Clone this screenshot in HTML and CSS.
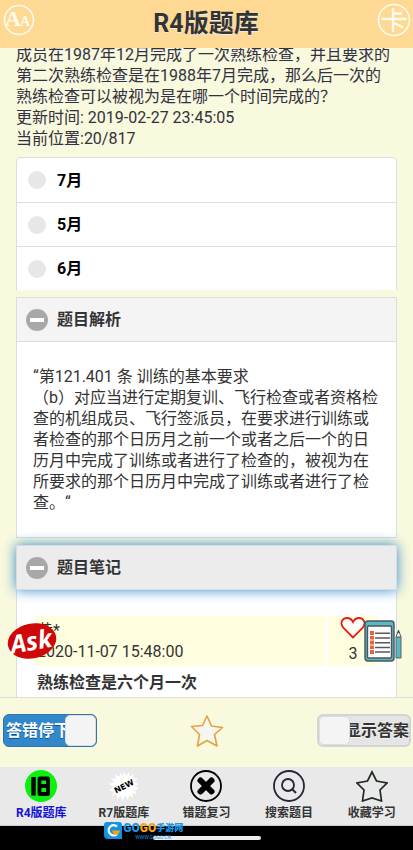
FILE: index.html
```html
<!DOCTYPE html>
<html lang="zh-CN">
<head>
<meta charset="utf-8">
<meta name="viewport" content="width=device-width, initial-scale=1">
<title>R4版题库</title>
<link rel="stylesheet" href="styles.css">
</head>
<body>
<header class="topbar">
  <button class="round" aria-label="字体大小">
    <svg width="32" height="32" viewBox="0 0 32 32"><circle cx="16" cy="16" r="14.5" fill="none" stroke="#fffaf0" stroke-width="1.6"/><text x="2" y="22" class="serif-a" font-size="22">A</text><text x="17" y="22" class="serif-a" font-size="14">A</text></svg>
  </button>
  <h1>R4版题库</h1>
  <button class="round" aria-label="答题卡">
    <svg width="34" height="34" viewBox="0 0 34 34"><circle cx="17" cy="17" r="15.500" fill="none" stroke="#fffaf0" stroke-width="1.6"/><path d="M16 5V29M16 10.500H25M4.500 16H29.500M17 20L26 24.500" fill="none" stroke="#fffaf0" stroke-width="2.400"/></svg>
  </button>
</header>

<main class="content">
  <p class="question">成员在1987年12月完成了一次熟练检查，并且要求的<br>第二次熟练检查是在1988年7月完成，那么后一次的<br>熟练检查可以被视为是在哪一个时间完成的？<br>更新时间: 2019-02-27 23:45:05<br>当前位置:20/817</p>

  <div class="options">
    <label><input type="radio" name="answer">7月</label>
    <label><input type="radio" name="answer">5月</label>
    <label><input type="radio" name="answer">6月</label>
  </div>

  <section class="panel">
    <button class="panel-head" aria-expanded="true"><span class="minus"></span>题目解析</button>
    <div class="panel-body">
      <p>“第121.401 条 训练的基本要求<br>（b）对应当进行定期复训、飞行检查或者资格检查的机组成员、飞行签派员，在要求进行训练或者检查的那个日历月之前一个或者之后一个的日历月中完成了训练或者进行了检查的，被视为在所要求的那个日历月中完成了训练或者进行了检查。“</p>
    </div>
  </section>

  <section class="panel notes">
    <button class="panel-head focused" aria-expanded="true"><span class="minus"></span>题目笔记</button>
    <div class="panel-body">
      <div class="note">
        <div class="note-meta">黄*<br>2020-11-07 15:48:00</div>
        <button class="note-like" aria-label="点赞">
          <svg width="26" height="24" viewBox="0 0 26 24"><path d="M13 21.500L3.500 12C-1 6.500 3 2 7 2C10 2 12 4 13 6C14 4 16 2 19 2C23 2 27 6.500 22.500 12Z" fill="#fffdf5" stroke="#e0201c" stroke-width="1.800"/></svg>
          <span>3</span>
        </button>
      </div>
      <p class="note-text">熟练检查是六个月一次</p>
    </div>
  </section>

  <button class="float ask" aria-label="提问">
    <svg width="50" height="40" viewBox="0 0 50 40"><ellipse cx="25" cy="20" rx="24.500" ry="17.500" transform="rotate(-12 25 20)" fill="#cf0707"/><text x="24" y="29" transform="rotate(-10 25 20)" class="ask-word">Ask</text></svg>
  </button>
  <button class="float notebook" aria-label="写笔记">
    <svg width="38" height="42" viewBox="0 0 38 42"><rect x="1" y="1" width="29" height="40" rx="3" fill="#5cb8c4" stroke="#49555b" stroke-width="1.400"/><rect x="3.500" y="6" width="24" height="32" rx="1" fill="#fff" stroke="#49555b" stroke-width="1.400"/><path d="M6 11h4v4h-4zM6 16h4v3.500h-4zM6 20.500h4v4h-4zM6 25.500h4v3.500h-4zM6 30h4v4h-4z" fill="#e56339"/><path d="M11 13.300H26M11 18H26M11 22.700H26M11 27.400H26M11 32.100H26" stroke="#59595f" stroke-width="1.500"/><path d="M32 17H37V38H32Z" fill="#5cb8c4" stroke="#59656b"/><path d="M32 17L34.500 10L37 17Z" fill="#f7f3e8" stroke="#59656b"/><path d="M33.500 13L34.500 10L35.500 13Z" fill="#444"/></svg>
  </button>
</main>

<div class="toolbar">
  <label class="switch on"><input type="checkbox" checked><span class="switch-text">答错停下</span><span class="knob"></span></label>
  <button class="favorite" aria-label="收藏">
    <svg width="34" height="34" viewBox="0 0 34 34"><path d="M17 2L21.500 12L32.500 13.500L24.500 20.500L27 32L17 26.500L7.500 32L9.500 20.500L1.500 12.500L12.500 11.500Z" fill="#f6f5ef" stroke="#e3a33d" stroke-width="1.600" stroke-linejoin="round"/></svg>
  </button>
  <label class="switch off"><input type="checkbox"><span class="knob"></span><span class="switch-text">显示答案</span></label>
</div>

<nav class="tabs">
  <a href="#r4" class="active">
    <svg width="32" height="32" viewBox="0 0 32 32"><circle cx="16" cy="16" r="16" fill="#09f20d"/><path d="M8.500 7V25.500" stroke="#000" stroke-width="4.500"/><path d="M14.500 8.500H23V24H14.500ZM14.500 16H23" fill="none" stroke="#000" stroke-width="3.800" stroke-linejoin="round"/></svg>
    R4版题库</a>
  <a href="#r7">
    <svg width="32" height="32" viewBox="0 0 32 32"><path d="M16 1L18 6L21 2L21.500 7L26 4L24.500 9L30 8L26.500 12L31 14L27 16L31 19L26.500 20L29 24L24.500 23L25 28L21 25L20 30L17 26L14 31L13 26L9 29L8.500 24L4 26L6 21L1 21L5 17L1 14L6 12L3 8L8 9L7 4L11.500 7L12 2L15 6Z" fill="#fff"/><text x="16" y="19" transform="rotate(-27 16 16)" class="new-word">NEW</text></svg>
    R7版题库</a>
  <a href="#wrong">
    <svg width="32" height="32" viewBox="0 0 32 32"><circle cx="16" cy="16" r="15" fill="none" stroke="#000" stroke-width="1.800"/><path d="M10.500 10.500L21.500 21.500M21.500 10.500L10.500 21.500" stroke="#000" stroke-width="6" stroke-linecap="round"/></svg>
    错题复习</a>
  <a href="#search">
    <svg width="32" height="32" viewBox="0 0 32 32"><circle cx="16" cy="16" r="15" fill="none" stroke="#25243b" stroke-width="1.800"/><circle cx="15" cy="15" r="6" fill="none" stroke="#25243b" stroke-width="1.800"/><path d="M19 19L23 23" stroke="#25243b" stroke-width="2"/></svg>
    搜索题目</a>
  <a href="#saved">
    <svg width="32" height="32" viewBox="0 0 32 32"><path d="M16 2L20.500 11L31 13L24 20L25.500 31L16 28L6.500 31L8 20L1 13L11.500 11Z" fill="none" stroke="#202b20" stroke-width="1.700"/></svg>
    收藏学习</a>
</nav>

<footer class="system">
  <div class="home-bar"></div>
  <div class="watermark">
    <svg width="20" height="19" viewBox="0 0 20 19"><path d="M4 1H16Q19 1 19 4V18H5Q1 18 1 14V4Q1 1 4 1Z" fill="#1293e0"/><path d="M14 5.500A5 5 0 1 0 14 13" fill="none" stroke="#fff" stroke-width="2.400"/><path d="M9 9.500H17Q16 14 11 14" fill="#f7a21b"/></svg>
    <span class="mark-text"><b>GO</b><b class="gold">GO</b><b class="cn">手游网</b><small>WWW.GOGO.CN</small></span>
  </div>
</footer>
</body>
</html>
```
FILE: styles.css
```css
* { box-sizing: border-box; }

body {
  margin: 0;
  height: 100vh;
  display: flex;
  flex-direction: column;
  background: #f9f9de;
  color: #333;
  font: 16px/21px Roboto, "Noto Sans CJK SC", sans-serif;
}

button {
  margin: 0;
  padding: 0;
  border: 0;
  background: none;
  color: inherit;
  font: inherit;
}

p { margin: 0; }
svg { display: block; }

.topbar {
  flex: none;
  height: 48px;
  padding: 0 2px 8px 3px;
  display: flex;
  align-items: center;
  justify-content: space-between;
  background: #fdd993;
}
.topbar h1 {
  margin: 8px 0 0;
  font-size: 25px;
  line-height: 32px;
  font-weight: 700;
  text-shadow: 0 1px 0 #eee;
}
.serif-a {
  fill: #fffaf0;
  font-family: "Liberation Serif", serif;
  font-weight: 700;
}

.content {
  flex: 1;
  min-height: 0;
  overflow: hidden;
  position: relative;
  padding: 0 16px;
}
.question { margin-top: -4px; text-shadow: 0 1px 0 #f3f3f3; }

.options {
  margin: 8px 0 7px;
  border: 1px solid #ddd;
  border-bottom: 0;
  border-radius: 5px 5px 0 0;
  background: #fff;
}
.options label {
  display: flex;
  align-items: center;
  gap: 11px;
  height: 44px;
  padding-left: 11px;
  color: #000;
  font-weight: 700;
}
.options label + label { border-top: 1px solid #ddd; }
.options input {
  appearance: none;
  margin: 0;
  width: 18px;
  height: 18px;
  border-radius: 50%;
  background: #e7e7e7;
}

.panel { margin-bottom: 7px; }
.panel-head {
  position: relative;
  display: flex;
  align-items: center;
  gap: 9px;
  width: 100%;
  height: 45px;
  padding-left: 9px;
  border: 1px solid #ddd;
  background: #f4f4f4;
  font-weight: 700;
  text-shadow: 0 1px 0 #f3f3f3;
}
.panel-head.focused {
  background: #ececec;
  border-color: #d3dde3;
  box-shadow: 0 0 12px #3388cc;
}
.minus {
  display: grid;
  place-items: center;
  width: 22px;
  height: 22px;
  border-radius: 50%;
  background: #a8a8a8;
}
.minus::before {
  content: "";
  width: 14px;
  height: 4px;
  background: #fff;
}
.panel-body {
  padding: 24px 16px;
  border: 1px solid #ddd;
  border-top: 0;
  background: #fff;
}
.notes .panel-body { padding: 26px 18px; }

.note { display: flex; gap: 3px; }
.note-meta, .note-like { height: 50px; background: #ffffe0; }
.note-meta { flex: 1; padding: 4px 2px; }
.note-like {
  width: 50px;
  display: flex;
  flex-direction: column;
  align-items: center;
}
.note-like span { margin-top: 3px; }
.note-text { padding: 6px 2px; font-weight: 700; }

.float { position: absolute; }
.ask { left: 7px; bottom: 36px; }
.notebook { right: 11px; bottom: 35px; }
.ask-word {
  fill: #fff;
  font: italic 700 25px "Liberation Sans Narrow", "Open Sans", sans-serif;
  text-anchor: middle;
}

.toolbar {
  flex: none;
  height: 70px;
  padding: 0 2px 4px 3px;
  border-top: 1px solid #ddd;
  display: flex;
  align-items: center;
  justify-content: space-between;
}
.switch {
  position: relative;
  display: flex;
  align-items: center;
  width: 94px;
  height: 33px;
  border-radius: 6px;
  overflow: hidden;
  font-weight: 700;
  white-space: nowrap;
}
.switch input {
  position: absolute;
  inset: 0;
  margin: 0;
  opacity: 0;
}
.switch-text { flex: 1; min-width: 0; overflow: hidden; }
.knob {
  flex: none;
  width: 31px;
  height: 100%;
  border: 1px solid #ddd;
  border-radius: 5px;
  background: #f4f4f4;
}
.on {
  padding-left: 2px;
  border: 1px solid #2f74ab;
  background: #3388cc;
  color: #fff;
  text-shadow: 0 1px 0 #005599;
}
.off {
  border: 2px solid #d4d4d4;
  background: #e5e5e5;
  text-shadow: 0 1px 0 #f3f3f3;
}
.off .switch-text { display: flex; justify-content: flex-end; }

.tabs {
  flex: none;
  display: grid;
  grid-template-columns: repeat(5, 1fr);
  height: 59px;
  padding-top: 3px;
  background: #e9e9e9;
  border-bottom: 1px solid #ccc;
}
.tabs a {
  display: flex;
  flex-direction: column;
  align-items: center;
  gap: 2px;
  color: #333;
  font-size: 12px;
  line-height: 18px;
  font-weight: 700;
  text-decoration: none;
}
.tabs .active { color: #1512d8; }
.new-word {
  font: 700 8px "DejaVu Sans", sans-serif;
  text-anchor: middle;
}

.system {
  flex: none;
  position: relative;
  height: 24px;
  padding-top: 10px;
  background: #000;
}
.home-bar {
  width: 108px;
  height: 4px;
  margin: 0 auto;
  border-radius: 2px;
  background: #eee;
}
.watermark {
  position: absolute;
  left: 25%;
  top: -5px;
  display: flex;
}
.mark-text {
  display: grid;
  grid-template-columns: auto auto auto;
  align-content: start;
  color: #1c96e5;
  font-family: "Liberation Sans Narrow", Roboto, "Noto Sans CJK SC", sans-serif;
  font-size: 12px;
  line-height: 14px;
}
.mark-text b { font-weight: 900; }
.mark-text .gold { color: #f8a51b; }
.mark-text .cn { font-size: 9px; }
.mark-text small {
  grid-column: 1 / -1;
  font-size: 5px;
  line-height: 5px;
  text-align: center;
}
```
